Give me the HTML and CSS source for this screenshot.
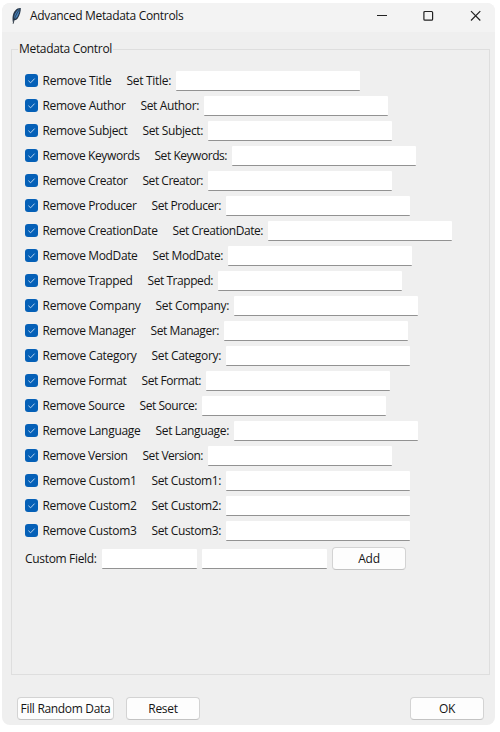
FILE: index.html
```html
<!DOCTYPE html>
<html lang="en">
<head>
<meta charset="utf-8">
<title>Advanced Metadata Controls</title>
<link rel="stylesheet" href="styles.css">
</head>
<body>
<main class="window">
  <header class="titlebar">
    <svg class="feather" viewBox="0 0 12 18"><path d="M2.3 16.5C1 12 1.2 6.800 4.200 3.400C6 1.400 8.200.7 9.800 1C10 4.200 8.800 8.600 6.700 11.400C5.300 12.900 3.700 13.400 2.800 13.300" fill="#28384b"/><path d="M3.100 12C2.900 8 5 4 8.400 2C8.700 5.700 6.700 10 4.600 11.500Z" fill="#4684c0"/><path d="M2.100 16.800C3.100 12 5 7 8.300 2.700" stroke="#26313e" stroke-width=".8" fill="none"/></svg>
    <h1 class="caption">Advanced Metadata Controls</h1>
    <svg class="controls" viewBox="0 0 106 12" fill="none" stroke="#222" stroke-width="1.200"><path d="M0 5.500h10"/><rect x="46.900" y="1.500" width="8.700" height="8.700" rx="1"/><path d="M94 1.200l9.300 9.300M103.300 1.200L94 10.500"/></svg>
  </header>
  <section class="panel">
    <h2 class="legend">Metadata Control</h2>
    <div class="rows" id="rows"></div>
    <div class="custom">
      <span class="custom-label">Custom Field:</span>
      <input class="entry entry-name" aria-label="Name">
      <input class="entry entry-value" aria-label="Value">
      <button class="button">Add</button>
    </div>
  </section>
  <footer class="actions">
    <button class="button fill">Fill Random Data</button>
    <button class="button">Reset</button>
    <button class="button ok">OK</button>
  </footer>
</main>
<script src="rows.js"></script>
</body>
</html>
```
FILE: styles.css
```css
* { box-sizing: border-box; }
body {
  margin: 0;
  background: #fff;
  color: #151515;
  font: 450 12px/16px "Open Sans", "Noto Sans", sans-serif;
  font-stretch: 90%;
  letter-spacing: -0.32px;
}
.window {
  width: 493px;
  height: 722px;
  margin: 3px 0 0 2px;
  border-radius: 8px;
  background: #efefef;
  overflow: hidden;
  display: flex;
  flex-direction: column;
}
.titlebar {
  height: 29px;
  flex: none;
  padding: 0 14px 3px 9px;
  display: flex;
  align-items: center;
  background: #f3f3f3;
}
.feather { width: 12px; height: 18px; }
.caption { margin: 0 0 0 7px; font-size: 12px; font-weight: 400; white-space: nowrap; }
.controls { width: 106px; height: 12px; margin-left: auto; margin-right: -2px; }
.panel {
  width: 479px;
  height: 626px;
  flex: none;
  margin: 17px 0 0 9px;
  padding: 0 0 0 13px;
  border: 1px solid #dedede;
}
.legend {
  width: max-content;
  height: 16px;
  margin: -9px 0 0 -7px;
  padding: 0 1px;
  background: #efefef;
  font-size: 12px;
  font-weight: inherit;
}
.rows { padding-top: 11px; }
.row {
  height: 25px;
  display: grid;
  grid-template-columns: 17.5px var(--remove) var(--set) 184px;
  align-items: center;
  white-space: nowrap;
}
.label { justify-self: start; }
.check { width: 13px; height: 13px; display: block; }
.entry {
  width: 184px;
  height: 20px;
  padding: 0 4px;
  border: 0;
  border-bottom: 1px solid #929292;
  border-radius: 1px;
  background: #fff;
  font: inherit;
  outline: 0;
}
.row .entry { margin-left: 0.5px; }
.custom { display: flex; align-items: center; height: 25px; margin-top: 3px; }
.custom-label { width: 77px; white-space: nowrap; }
.entry-name { width: 95px; }
.entry-value { width: 125px; margin: 0 5px; }
.button {
  width: 74px;
  height: 23px;
  padding: 0;
  border: 1px solid #d3d3d3;
  border-bottom-color: #c3c3c3;
  border-radius: 4px;
  background: #fdfdfd;
  color: inherit;
  font: inherit;
  letter-spacing: inherit;
  white-space: nowrap;
}
.actions { display: flex; margin: 22px 11px 0 15px; }
.fill { width: 97px; margin-right: 12px; }
.ok { margin-left: auto; }
```
FILE: rows.js
```js
// Field name, label column width, set-label column width.
const fields = [
  ["Title", 84, 49], ["Author", 98, 63], ["Subject", 100, 65],
  ["Keywords", 112, 77], ["Creator", 100, 65], ["Producer", 109, 74],
  ["CreationDate", 130, 95], ["ModDate", 110, 75], ["Trapped", 105, 70],
  ["Company", 113, 78], ["Manager", 108, 73], ["Category", 109, 74],
  ["Format", 99, 64], ["Source", 97, 62], ["Language", 113, 78],
  ["Version", 100, 65], ["Custom1", 109, 74], ["Custom2", 109, 74],
  ["Custom3", 109, 74]
];
document.getElementById("rows").innerHTML = fields.map(([name, remove, set]) => `
  <div class="row" style="--remove:${remove}px;--set:${set}px">
    <svg class="check" viewBox="0 0 13 13"><rect width="13" height="13" rx="3" fill="#0560b7"/><path d="M3.400 6.700l2.200 2.100 4-4.200" fill="none" stroke="#b7d3ee"/></svg>
    <span class="label" data-width="${remove - 15}">Remove ${name}</span>
    <span class="label" data-width="${set - 4.5}">Set ${name}:</span>
    <input class="entry" aria-label="${name}">
  </div>`).join("");

// Track each label so that it fills its share of the column.
document.querySelectorAll(".label").forEach(label => {
  label.style.letterSpacing = "0px";
  const slack = Number(label.dataset.width) - label.getBoundingClientRect().width;
  label.style.letterSpacing = `${slack / label.textContent.length}px`;
});
```
